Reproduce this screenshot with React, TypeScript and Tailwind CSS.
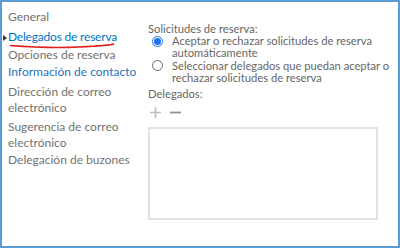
import React from "react";

export default function App() {
  const font = { fontFamily: 'Lato, "Noto Sans", sans-serif' };
  return (
    <div
      className="w-[400px] h-[248px] bg-white border-2 border-[#5b9bd5] box-border flex overflow-hidden text-[#727272]"
      style={font}
    >
      <div className="w-[144px] shrink-0 pl-[6px] pt-[7px] flex flex-col text-[12px] leading-[16px]">
        <div className="h-[19px]">General</div>
        <div className="relative h-[19px] text-[12px] tracking-[-0.2px] leading-[16px] text-[#0072c6] pt-[1px]">
          <span className="absolute left-[-5px] top-[7px] w-0 h-0 border-y-[3px] border-y-transparent border-l-[4px] border-l-[#333]" />
          Delegados de reserva
          <svg className="absolute left-[1px] top-[15px]" width="106" height="6" viewBox="0 0 106 6">
            <path d="M1 2.5 Q 40 5.5 70 4 T 105 1" stroke="#e0201b" strokeWidth="1.4" fill="none" />
          </svg>
        </div>
        <div className="h-[17px]">Opciones de reserva</div>
        <div className="h-[19px] text-[#2a73b8]">Información de contacto</div>
        <div className="mb-[3px] mt-[1px]">Dirección de correo<br />electrónico</div>
        <div className="mb-[1px]">Sugerencia de correo<br />electrónico</div>
        <div>Delegación de buzones</div>
      </div>
      <div className="flex-1 pt-[21px] pl-[2px] text-[11.2px] leading-[12px] text-[#666]">
        <div>Solicitudes de reserva:</div>
        <div className="flex items-start pl-[4px]">
          <span className="mt-[1px] w-[11px] h-[11px] rounded-full border border-[#1a73e8] flex items-center justify-center shrink-0 bg-white">
            <span className="w-[7px] h-[7px] rounded-full bg-[#1a73e8]" />
          </span>
          <span className="ml-[9px]">Aceptar o rechazar solicitudes de reserva<br />automáticamente</span>
        </div>
        <div className="flex items-start pl-[4px] mt-[1px]">
          <span className="mt-[0px] w-[11px] h-[11px] rounded-full border border-[#666] shrink-0 bg-white" />
          <span className="ml-[9px]">Seleccionar delegados que puedan aceptar o<br />rechazar solicitudes de reserva</span>
        </div>
        <div className="mt-[4px]">Delegados:</div>
        <div className="flex items-center gap-[9px] mt-[5px] ml-[2px] h-[14px]">
          <svg width="11" height="11" viewBox="0 0 11 11"><path d="M5.5 0v11M0 5.5h11" stroke="#bdbdbd" strokeWidth="1.6" /></svg>
          <svg width="11" height="11" viewBox="0 0 11 11"><path d="M0 5.5h11" stroke="#8a9696" strokeWidth="1.8" /></svg>
        </div>
        <div className="mt-[8px] w-[230px] h-[93px] border-2 border-[#e0e3e3]" />
      </div>
    </div>
  );
}
